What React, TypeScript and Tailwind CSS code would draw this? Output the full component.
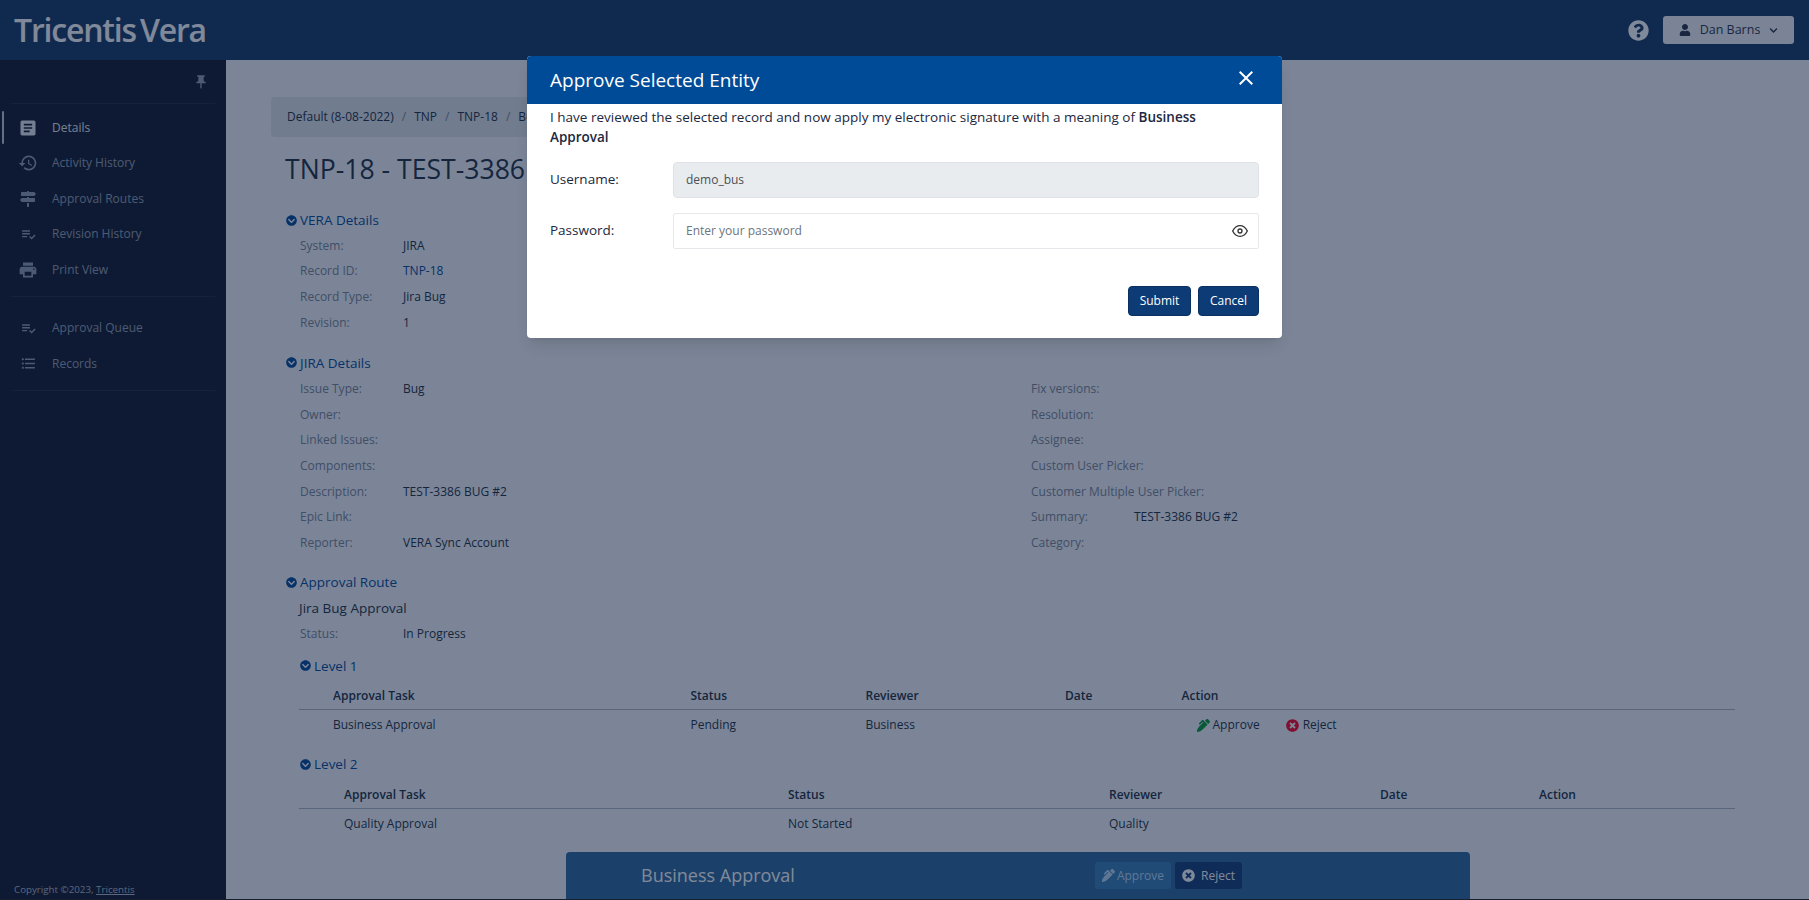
import React from 'react';
import {
  MdArticle,
  MdHistory,
  MdPlaylistAddCheck,
  MdPrint,
  MdFormatListBulleted,
  MdPushPin,
  MdClose,
} from 'react-icons/md';
import {
  FaChevronCircleDown,
  FaChevronDown,
  FaMapSigns,
  FaPenAlt,
  FaQuestionCircle,
  FaTimesCircle,
  FaUser,
} from 'react-icons/fa';
import { FiEye } from 'react-icons/fi';

const topNav = [
  { label: 'Details', icon: MdArticle, size: 20, active: true },
  { label: 'Activity History', icon: MdHistory, size: 20 },
  { label: 'Approval Routes', icon: FaMapSigns, size: 16 },
  { label: 'Revision History', icon: MdPlaylistAddCheck, size: 17 },
  { label: 'Print View', icon: MdPrint, size: 20 },
];

const bottomNav = [
  { label: 'Approval Queue', icon: MdPlaylistAddCheck, size: 17 },
  { label: 'Records', icon: MdFormatListBulleted, size: 17 },
];

const veraRows = [
  ['System:', 'JIRA'],
  ['Record ID:', 'TNP-18'],
  ['Record Type:', 'Jira Bug'],
  ['Revision:', '1'],
];

const jiraLeft = [
  ['Issue Type:', 'Bug'],
  ['Owner:', ''],
  ['Linked Issues:', ''],
  ['Components:', ''],
  ['Description:', 'TEST-3386 BUG #2'],
  ['Epic Link:', ''],
  ['Reporter:', 'VERA Sync Account'],
];

const jiraRight = [
  ['Fix versions:', ''],
  ['Resolution:', ''],
  ['Assignee:', ''],
  ['Custom User Picker:', ''],
  ['Customer Multiple User Picker:', ''],
  ['Summary:', 'TEST-3386 BUG #2'],
  ['Category:', ''],
];

function NavItem({ item }: { item: { label: string; icon: any; size: number; active?: boolean } }) {
  const Icon = item.icon;
  return (
    <div className={`relative flex h-[35.5px] items-center text-[12px] ${item.active ? 'text-[#e8ebf0]' : 'text-[#98a0b3]'}`}>
      {item.active && <span className="absolute left-[2px] top-[1px] h-[33px] w-[2px] rounded bg-[#c8ccd4]" />}
      <span className="flex w-[52px] justify-center pl-[4px]">
        <Icon size={item.size} />
      </span>
      <span>{item.label}</span>
    </div>
  );
}

function SectionTitle({ title, indent }: { title: string; indent?: boolean }) {
  return (
    <div className={`flex h-[25px] items-center gap-[3px] text-[13.5px] text-[#0b4f9e] ${indent ? 'pl-[14px]' : ''}`}>
      <FaChevronCircleDown size={11} />
      <span>{title}</span>
    </div>
  );
}

function Field({ label, value, link }: { label: string; value: string; link?: boolean }) {
  return (
    <div className="flex h-[25.6px] items-center text-[12px]">
      <span className="min-w-[103px] whitespace-nowrap text-[#7f8899]">{label}</span>
      <span className={link ? 'text-[#0b4f9e]' : 'text-[#2b3649]'}>{value}</span>
    </div>
  );
}

function ApprovalTable({
  columns,
  task,
  status,
  reviewer,
  action,
  pad,
}: {
  columns: string;
  task: string;
  status: string;
  reviewer: string;
  action?: boolean;
  pad: string;
}) {
  return (
    <div className="ml-[13px] mr-[74px] text-[12px]">
      <div className={`grid h-[32px] items-center border-b border-[#aeb6c4] pt-[5px] font-semibold text-[#2b3649] ${columns} ${pad}`}>
        <span>Approval Task</span>
        <span>Status</span>
        <span>Reviewer</span>
        <span>Date</span>
        <span>Action</span>
      </div>
      <div className={`grid h-[30px] items-center text-[#2b3649] ${columns} ${pad}`}>
        <span>{task}</span>
        <span>{status}</span>
        <span>{reviewer}</span>
        <span />
        {action ? (
          <span className="flex items-center pl-[15px]">
            <FaPenAlt size={13} className="mr-[3px] text-[#0f9d3f]" />
            <span>Approve</span>
            <FaTimesCircle size={13} className="ml-[26px] mr-[4px] text-[#ff0a2a]" />
            <span>Reject</span>
          </span>
        ) : (
          <span />
        )}
      </div>
    </div>
  );
}

export default function App() {
  return (
    <div className="relative h-[900px] w-full overflow-hidden bg-[#2a2a2a] font-['Open_Sans',sans-serif]">
      <div className="flex h-[899px] flex-col">
        <header className="flex h-[60px] flex-none items-center justify-between bg-[#1f3f6a] pl-[14px] pr-[15px]">
          <div className="text-[32px] font-semibold tracking-[-1.2px] text-white [word-spacing:-3px]">Tricentis Vera</div>
          <div className="flex items-center gap-[14px]">
            <FaQuestionCircle size={21} className="text-white" />
            <button className="flex h-[28px] w-[131px] items-center justify-center gap-[9px] rounded-[3px] bg-[#f3f5f8] text-[12.5px] text-[#33394d]">
              <FaUser size={12} />
              <span>Dan Barns</span>
              <FaChevronDown size={9} />
            </button>
          </div>
        </header>

        <div className="flex min-h-0 flex-1">
          <aside className="flex w-[226px] flex-none flex-col bg-[#1b2132] text-[#98a0b3]">
            <div className="mx-[11px] flex h-[44px] flex-none items-center justify-end border-b border-[#2a3145] pr-[6px]">
              <MdPushPin size={16} />
            </div>
            <nav className="pt-[6px]">
              {topNav.map((item) => (
                <NavItem key={item.label} item={item} />
              ))}
            </nav>
            <div className="mx-[11px] mt-[8px] border-b border-[#2a3145]" />
            <nav className="pt-[14px]">
              {bottomNav.map((item) => (
                <NavItem key={item.label} item={item} />
              ))}
            </nav>
            <div className="mx-[11px] mt-[8px] border-b border-[#2a3145]" />
            <div className="mt-auto pb-[1px] pl-[14px] text-[9.75px] text-[#b4bac8]">
              Copyright ©2023, <span className="underline">Tricentis</span>
            </div>
          </aside>

          <main className="relative min-w-0 flex-1 overflow-hidden bg-[#f5f7fa] pl-[45px] pt-[37px]">
            <div className="flex h-[40px] w-[700px] items-center gap-[8px] rounded bg-[#e1e5ea] pl-[16px] text-[12px] text-[#2b3649]">
              <span>Default (8-08-2022)</span>
              <span className="text-[#7f8899]">/</span>
              <span>TNP</span>
              <span className="text-[#7f8899]">/</span>
              <span>TNP-18</span>
              <span className="text-[#7f8899]">/</span>
              <span>Bug</span>
            </div>

            <h1 className="ml-[14px] mt-[14px] h-[40px] text-[26.6px] leading-[37px] text-[#2b3649]">TNP-18 - TEST-3386</h1>

            <div className="ml-[15px] mt-[17px]">
              <SectionTitle title="VERA Details" />
              <div className="pl-[14px]">
                {veraRows.map(([label, value]) => (
                  <Field key={label} label={label} value={value} link={label === 'Record ID:'} />
                ))}
              </div>

              <div className="mt-[15px]">
                <SectionTitle title="JIRA Details" />
                <div className="flex pl-[14px] pt-[1px]">
                  <div className="w-[731px]">
                    {jiraLeft.map(([label, value]) => (
                      <Field key={label} label={label} value={value} />
                    ))}
                  </div>
                  <div>
                    {jiraRight.map(([label, value]) => (
                      <Field key={label} label={label} value={value} />
                    ))}
                  </div>
                </div>
              </div>

              <div className="mt-[14px]">
                <SectionTitle title="Approval Route" />
                <div className="ml-[13px] flex h-[27px] items-center text-[13.5px] text-[#2b3649]">Jira Bug Approval</div>
                <div className="pl-[14px]">
                  <Field label="Status:" value="In Progress" />
                </div>
                <div className="mt-[6px]">
                  <SectionTitle title="Level 1" indent />
                </div>
                <ApprovalTable
                  columns="grid-cols-[357.5px_175px_199.5px_116.5px_1fr]"
                  pad="pl-[34px]"
                  task="Business Approval"
                  status="Pending"
                  reviewer="Business"
                  action
                />
                <div className="mt-[11.5px]">
                  <SectionTitle title="Level 2" indent />
                </div>
                <ApprovalTable
                  columns="grid-cols-[444px_321px_271px_159px_1fr]"
                  pad="pl-[45px]"
                  task="Quality Approval"
                  status="Not Started"
                  reviewer="Quality"
                />
              </div>
            </div>

            <div className="absolute bottom-0 left-[340px] flex h-[47px] w-[904px] items-center rounded-t-[4px] bg-[#356d9e] pl-[75px]">
              <span className="w-[454px] text-[18px] text-white">Business Approval</span>
              <div className="flex items-center gap-[4px] text-[12px]">
                <button className="flex h-[27px] w-[76px] items-center justify-center gap-[2px] rounded-[3px] bg-[#3f83b8] text-[#bddbf6]">
                  <FaPenAlt size={13} />
                  <span>Approve</span>
                </button>
                <button className="flex h-[27px] w-[67px] items-center justify-center gap-[6px] rounded-[3px] bg-[#1d457c] text-white">
                  <FaTimesCircle size={13} />
                  <span>Reject</span>
                </button>
              </div>
            </div>
          </main>
        </div>
      </div>

      <div className="absolute inset-0 bg-[#011334]/50" />

      <div className="absolute left-[527px] top-[56px] flex h-[282px] w-[755px] flex-col overflow-hidden rounded-[4px] bg-white shadow-lg">
        <div className="flex h-[48px] flex-none items-center justify-between bg-[#004b98] pl-[23px] pr-[24px] text-white">
          <span className="text-[19px] font-medium">Approve Selected Entity</span>
          <MdClose size={24} className="mb-[4px]" />
        </div>
        <div className="flex flex-1 flex-col px-[23px] text-[13.5px] leading-[20.25px] text-[#1c2740]">
          <p className="pr-[40px] pt-[3px]">
            I have reviewed the selected record and now apply my electronic signature with a meaning of{' '}
            <strong className="font-semibold">Business Approval</strong>
          </p>
          <div className="mt-[14.5px] flex h-[36px] items-center">
            <label className="w-[123px] pb-[2px]">Username:</label>
            <div className="flex h-full flex-1 items-center rounded-[4px] border border-[#dee2e6] bg-[#e9ecef] pl-[12px] text-[12px] text-[#495057]">
              demo_bus
            </div>
          </div>
          <div className="mt-[15px] flex h-[36px] items-center">
            <label className="w-[123px] pb-[2px]">Password:</label>
            <div className="flex h-full flex-1 items-center justify-between rounded-[2px] border border-[#e6e8ec] pl-[12px] pr-[10px] text-[12px] text-[#6c757d]">
              <span>Enter your password</span>
              <FiEye size={16} className="text-[#333]" />
            </div>
          </div>
          <div className="mt-[37px] flex justify-end gap-[7px] text-[12px]">
            <button className="h-[30px] w-[63px] rounded-[4px] border border-[#0a3060] bg-[#0d3b75] text-white">Submit</button>
            <button className="h-[30px] w-[61px] rounded-[4px] border border-[#0a3060] bg-[#0d3b75] text-white">Cancel</button>
          </div>
        </div>
      </div>
    </div>
  );
}
